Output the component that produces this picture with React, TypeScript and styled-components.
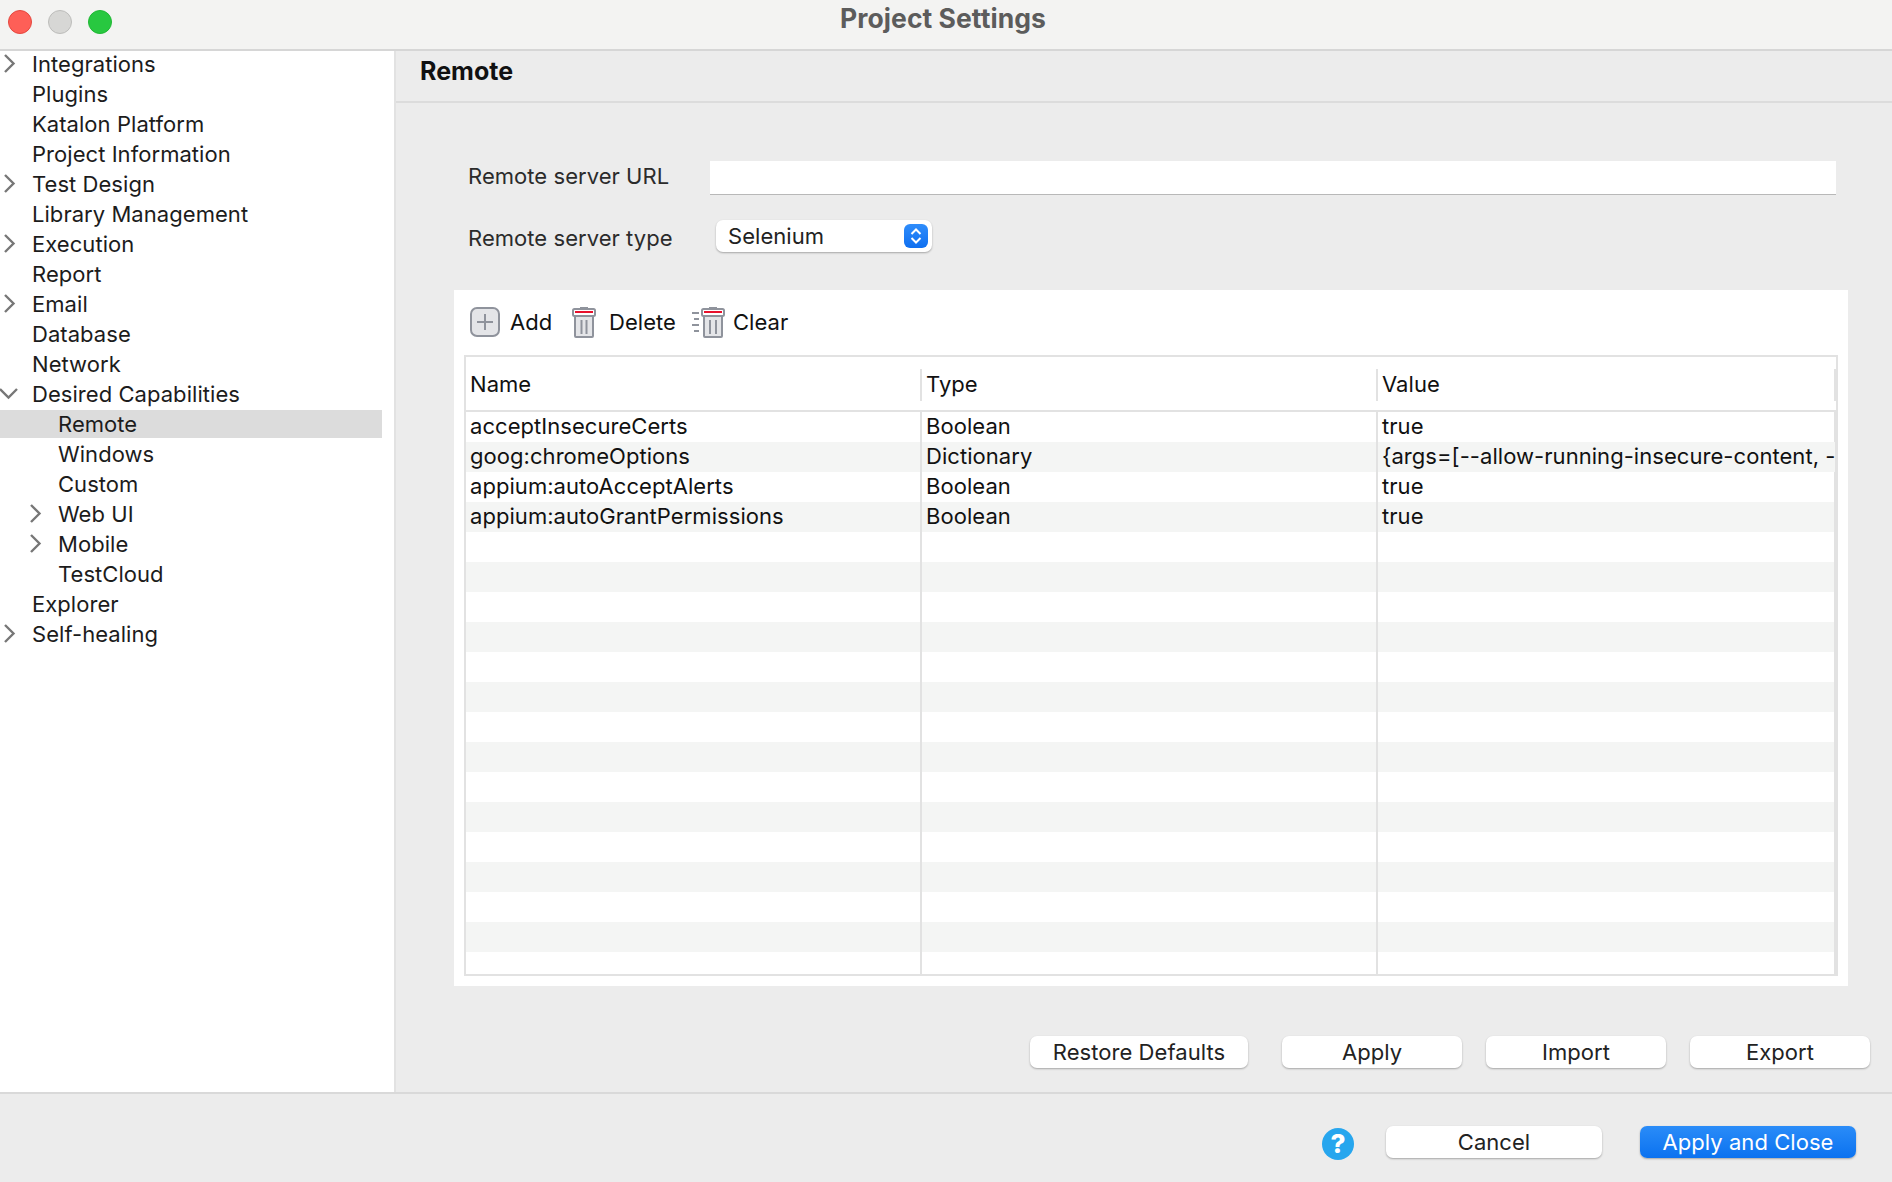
import React from 'react';
import styled, { createGlobalStyle } from 'styled-components';

const GlobalStyle = createGlobalStyle`
  html, body {
    margin: 0;
    padding: 0;
    background: #ececec;
  }
  * {
    box-sizing: border-box;
  }
`;

const Window = styled.div`
  width: 1892px;
  height: 1182px;
  display: flex;
  flex-direction: column;
  overflow: hidden;
  background: #ececec;
  font-family: Inter, "Liberation Sans", sans-serif;
  font-size: 22px;
  letter-spacing: 0.05px;
  color: #1c1c1c;
`;

const TitleBar = styled.div`
  height: 51px;
  flex: none;
  display: grid;
  grid-template-columns: 1fr auto 1fr;
  background: #f3f3f2;
  border-bottom: 2px solid #d6d6d6;
  padding-right: 6px;
`;

const Lights = styled.div`
  display: flex;
  gap: 16px;
  padding: 10px 0 0 8px;
`;

const Light = styled.span<{ $fill: string; $edge: string }>`
  width: 24px;
  height: 24px;
  border-radius: 50%;
  background: ${({ $fill }) => $fill};
  border: 1px solid ${({ $edge }) => $edge};
`;

const Title = styled.div`
  font-size: 26.5px;
  font-weight: 700;
  line-height: 36px;
  color: #5c5c5c;
`;

const Main = styled.div`
  flex: 1;
  display: flex;
  min-height: 0;
`;

const Sidebar = styled.nav`
  width: 396px;
  flex: none;
  background: #fff;
  border-right: 2px solid #e2e2e2;
  padding-right: 12px;
`;

const TreeRow = styled.div<{ $level: number; $selected?: boolean }>`
  height: ${({ $selected }) => ($selected ? 28 : 30)}px;
  margin: ${({ $selected }) => ($selected ? '-1px 0 3px' : '0')};
  padding-bottom: ${({ $selected }) => ($selected ? 0 : 4)}px;
  display: flex;
  align-items: center;
  position: relative;
  padding-left: ${({ $level }) => 32 + $level * 26}px;
  background: ${({ $selected }) => ($selected ? '#dcdcdc' : 'transparent')};
  white-space: nowrap;
`;

const Twisty = styled.svg<{ $level: number }>`
  position: absolute;
  left: ${({ $level }) => $level * 26}px;
  top: 3px;
  width: 20px;
  height: 20px;
  fill: none;
  stroke: #777;
  stroke-width: 2.4;
`;

const Content = styled.section`
  flex: 1;
  min-width: 0;
  display: flex;
  flex-direction: column;
`;

const PageHeader = styled.h1`
  margin: 0;
  height: 52px;
  flex: none;
  padding: 0 0 11px 24px;
  display: flex;
  align-items: center;
  font-size: 25px;
  font-weight: 700;
  color: #111;
  border-bottom: 2px solid #dcdcdc;
`;

const Form = styled.div`
  display: flex;
  flex-direction: column;
  padding: 58px 56px 0 72px;
  gap: 26px;
`;

const FormRow = styled.div<{ $height: number }>`
  display: flex;
  align-items: center;
  height: ${({ $height }) => $height}px;
`;

const FieldLabel = styled.label<{ $drop?: boolean }>`
  width: 242px;
  flex: none;
  color: #2b2b2b;
  padding: ${({ $drop }) => ($drop ? '1px 0 0' : '0 0 5px')};
`;

const TextInput = styled.div`
  flex: 1;
  height: 34px;
  background: #fff;
  border-bottom: 1px solid #b8b8b8;
`;

const Select = styled.div`
  width: 216px;
  height: 32px;
  align-self: flex-start;
  margin: -1px 0 0 6px;
  padding: 0 4px 0 12px;
  display: flex;
  align-items: center;
  justify-content: space-between;
  background: #fff;
  border-radius: 7px;
  box-shadow: 0 1px 2px rgba(0, 0, 0, 0.3);
  color: #222;
`;

const SelectArrows = styled.span`
  width: 24px;
  height: 24px;
  display: flex;
  align-items: center;
  justify-content: center;
  border-radius: 6px;
  background: linear-gradient(#2f8dfb, #0f6ff0);
`;

const Panel = styled.div`
  margin: 36px 44px 0 58px;
  height: 696px;
  flex: none;
  background: #fff;
  padding: 0 10px 10px 10px;
  display: flex;
  flex-direction: column;
`;

const Toolbar = styled.div`
  height: 65px;
  flex: none;
  display: flex;
  align-items: center;
  padding: 0 0 1px 5px;
  color: #111;
`;

const ToolButton = styled.div<{ $width: number; $gap: number }>`
  width: ${({ $width }) => $width}px;
  flex: none;
  display: flex;
  align-items: center;
  gap: ${({ $gap }) => $gap}px;
`;

const TableFrame = styled.div`
  flex: 1;
  min-height: 0;
  border: 2px solid #e2e2e2;
  overflow: hidden;
  display: flex;
  flex-direction: column;
  color: #111;
`;

const HeaderRow = styled.div`
  height: 55px;
  flex: none;
  display: grid;
  grid-template-columns: 456px 456px 1fr;
  align-items: center;
  border-bottom: 2px solid #e2e2e2;
`;

const HeaderCell = styled.div`
  height: 32px;
  padding: 0 0 2px 4px;
  display: flex;
  align-items: center;
  border-right: 2px solid #e2e2e2;
  margin-top: 2px;
`;

const Body = styled.div`
  flex: 1;
  min-height: 0;
  overflow: hidden;
`;

const BodyRow = styled.div<{ $odd: boolean }>`
  height: 30px;
  display: grid;
  grid-template-columns: 456px 456px 1fr;
  background: ${({ $odd }) => ($odd ? '#f4f5f4' : '#fff')};
`;

const Filler = styled.div`
  height: 100%;
  display: grid;
  grid-template-columns: 456px 456px 1fr;
`;

const Cell = styled.div`
  padding: 0 0 2px 4px;
  display: flex;
  align-items: center;
  white-space: nowrap;
  border-right: 2px solid #e2e2e2;
`;

const PageActions = styled.div`
  display: flex;
  justify-content: flex-end;
  gap: 24px;
  padding: 50px 22px 0 0;
`;

const Button = styled.button<{ $width: number; $primary?: boolean }>`
  width: ${({ $width }) => $width}px;
  height: 32px;
  padding: 0;
  border: none;
  border-radius: 7px;
  font: inherit;
  letter-spacing: inherit;
  color: ${({ $primary }) => ($primary ? '#fff' : '#222')};
  background: ${({ $primary }) => ($primary ? 'linear-gradient(#2a8cf8, #0b72f0)' : '#fff')};
  box-shadow: 0 1px 2px rgba(0, 0, 0, 0.3);
`;

const RestoreButton = styled(Button)`
  margin-right: 10px;
`;

const Footer = styled.footer`
  height: 90px;
  flex: none;
  display: flex;
  align-items: flex-start;
  justify-content: flex-end;
  padding: 32px 36px 0 0;
  border-top: 2px solid #d9d9d9;
`;

const HelpIcon = styled.svg`
  width: 32px;
  height: 32px;
  margin: 2px 32px 0 0;
`;

const CloseGap = styled.span`
  width: 38px;
  flex: none;
`;

const tree: { label: string; level: number; arrow?: 'right' | 'down'; selected?: boolean }[] = [
  { label: 'Integrations', level: 0, arrow: 'right' },
  { label: 'Plugins', level: 0 },
  { label: 'Katalon Platform', level: 0 },
  { label: 'Project Information', level: 0 },
  { label: 'Test Design', level: 0, arrow: 'right' },
  { label: 'Library Management', level: 0 },
  { label: 'Execution', level: 0, arrow: 'right' },
  { label: 'Report', level: 0 },
  { label: 'Email', level: 0, arrow: 'right' },
  { label: 'Database', level: 0 },
  { label: 'Network', level: 0 },
  { label: 'Desired Capabilities', level: 0, arrow: 'down' },
  { label: 'Remote', level: 1, selected: true },
  { label: 'Windows', level: 1 },
  { label: 'Custom', level: 1 },
  { label: 'Web UI', level: 1, arrow: 'right' },
  { label: 'Mobile', level: 1, arrow: 'right' },
  { label: 'TestCloud', level: 1 },
  { label: 'Explorer', level: 0 },
  { label: 'Self-healing', level: 0, arrow: 'right' },
];

const capabilities = [
  ['acceptInsecureCerts', 'Boolean', 'true'],
  ['goog:chromeOptions', 'Dictionary', '{args=[--allow-running-insecure-content, -'],
  ['appium:autoAcceptAlerts', 'Boolean', 'true'],
  ['appium:autoGrantPermissions', 'Boolean', 'true'],
];

const AddIcon = () => (
  <svg width="32" height="32" viewBox="0 0 32 32">
    <rect x="2" y="2" width="28" height="28" rx="6" fill="#e4e5e8" stroke="#8f939c" strokeWidth="2" />
    <path d="M16 8v16M8 16h16" stroke="#8f939c" strokeWidth="2" />
  </svg>
);

const TrashIcon = () => (
  <svg width="24" height="32" viewBox="0 0 24 32">
    <path d="M8 2h8" stroke="#8f939c" strokeWidth="2" />
    <rect x="1" y="3" width="22" height="7" rx="1.5" fill="#fff" stroke="#8f939c" strokeWidth="2" />
    <path d="M3 6h18" stroke="#e8112d" strokeWidth="2" />
    <path d="M3 10h18v20a1 1 0 0 1-1 1H4a1 1 0 0 1-1-1z" fill="#e4e5e8" stroke="#8f939c" strokeWidth="2" />
    <path d="M9.5 14v14M14.5 14v14" stroke="#8f939c" strokeWidth="2" />
  </svg>
);

const ClearIcon = () => (
  <svg width="33" height="32" viewBox="0 0 33 32">
    <path d="M0 7h7M2 13h5M0 19h7M2 25h5" stroke="#8f939c" strokeWidth="2" />
    <path d="M17 2h8" stroke="#8f939c" strokeWidth="2" />
    <rect x="10" y="3" width="22" height="7" rx="1.5" fill="#fff" stroke="#8f939c" strokeWidth="2" />
    <path d="M12 6h18" stroke="#e8112d" strokeWidth="2" />
    <path d="M12 10h18v20a1 1 0 0 1-1 1H13a1 1 0 0 1-1-1z" fill="#e4e5e8" stroke="#8f939c" strokeWidth="2" />
    <path d="M18 14v14M24 14v14" stroke="#8f939c" strokeWidth="2" />
  </svg>
);

const App: React.FC = () => {
  return (
    <>
      <GlobalStyle />
      <Window>
        <TitleBar>
          <Lights>
            <Light $fill="#fe5f57" $edge="#e5473f" />
            <Light $fill="#d7d7d5" $edge="#bdbdbb" />
            <Light $fill="#28c840" $edge="#1fb834" />
          </Lights>
          <Title>Project Settings</Title>
          <span />
        </TitleBar>
        <Main>
          <Sidebar>
            {tree.map((item) => (
              <TreeRow key={item.label} $level={item.level} $selected={item.selected}>
                {item.arrow && (
                  <Twisty $level={item.level} viewBox="0 0 20 20">
                    <path d={item.arrow === 'right' ? 'M5 1l8.5 8.5-8.5 8.5' : 'M0 5l8.5 8.5 8.5-8.5'} />
                  </Twisty>
                )}
                {item.label}
              </TreeRow>
            ))}
          </Sidebar>
          <Content>
            <PageHeader>Remote</PageHeader>
            <Form>
              <FormRow $height={34}>
                <FieldLabel>Remote server URL</FieldLabel>
                <TextInput />
              </FormRow>
              <FormRow $height={33}>
                <FieldLabel $drop>Remote server type</FieldLabel>
                <Select>
                  Selenium
                  <SelectArrows>
                    <svg width="14" height="18" viewBox="0 0 14 18" fill="none" stroke="#fff" strokeWidth="2">
                      <path d="M2.5 7L7 2.5 11.5 7M2.5 11L7 15.5 11.5 11" />
                    </svg>
                  </SelectArrows>
                </Select>
              </FormRow>
            </Form>
            <Panel>
              <Toolbar>
                <ToolButton $width={103} $gap={9}>
                  <AddIcon />
                  Add
                </ToolButton>
                <ToolButton $width={120} $gap={13}>
                  <TrashIcon />
                  Delete
                </ToolButton>
                <ToolButton $width={100} $gap={8}>
                  <ClearIcon />
                  Clear
                </ToolButton>
              </Toolbar>
              <TableFrame>
                <HeaderRow>
                  <HeaderCell>Name</HeaderCell>
                  <HeaderCell>Type</HeaderCell>
                  <HeaderCell>Value</HeaderCell>
                </HeaderRow>
                <Body>
                  {Array.from({ length: 18 }).map((_, i) => (
                    <BodyRow key={i} $odd={i % 2 === 1}>
                      <Cell>{capabilities[i]?.[0]}</Cell>
                      <Cell>{capabilities[i]?.[1]}</Cell>
                      <Cell>{capabilities[i]?.[2]}</Cell>
                    </BodyRow>
                  ))}
                  <Filler>
                    <Cell />
                    <Cell />
                    <Cell />
                  </Filler>
                </Body>
              </TableFrame>
            </Panel>
            <PageActions>
              <RestoreButton $width={218}>Restore Defaults</RestoreButton>
              <Button $width={180}>Apply</Button>
              <Button $width={180}>Import</Button>
              <Button $width={180}>Export</Button>
            </PageActions>
          </Content>
        </Main>
        <Footer>
          <HelpIcon viewBox="0 0 32 32">
            <circle cx="16" cy="16" r="16" fill="#27a6ee" />
            <text x="16" y="25" textAnchor="middle" fontSize="26" fontWeight="800" fill="#fff" fontFamily="Inter, sans-serif">?</text>
          </HelpIcon>
          <Button $width={216}>Cancel</Button>
          <CloseGap />
          <Button $width={216} $primary>Apply and Close</Button>
        </Footer>
      </Window>
    </>
  );
};

export default App;
